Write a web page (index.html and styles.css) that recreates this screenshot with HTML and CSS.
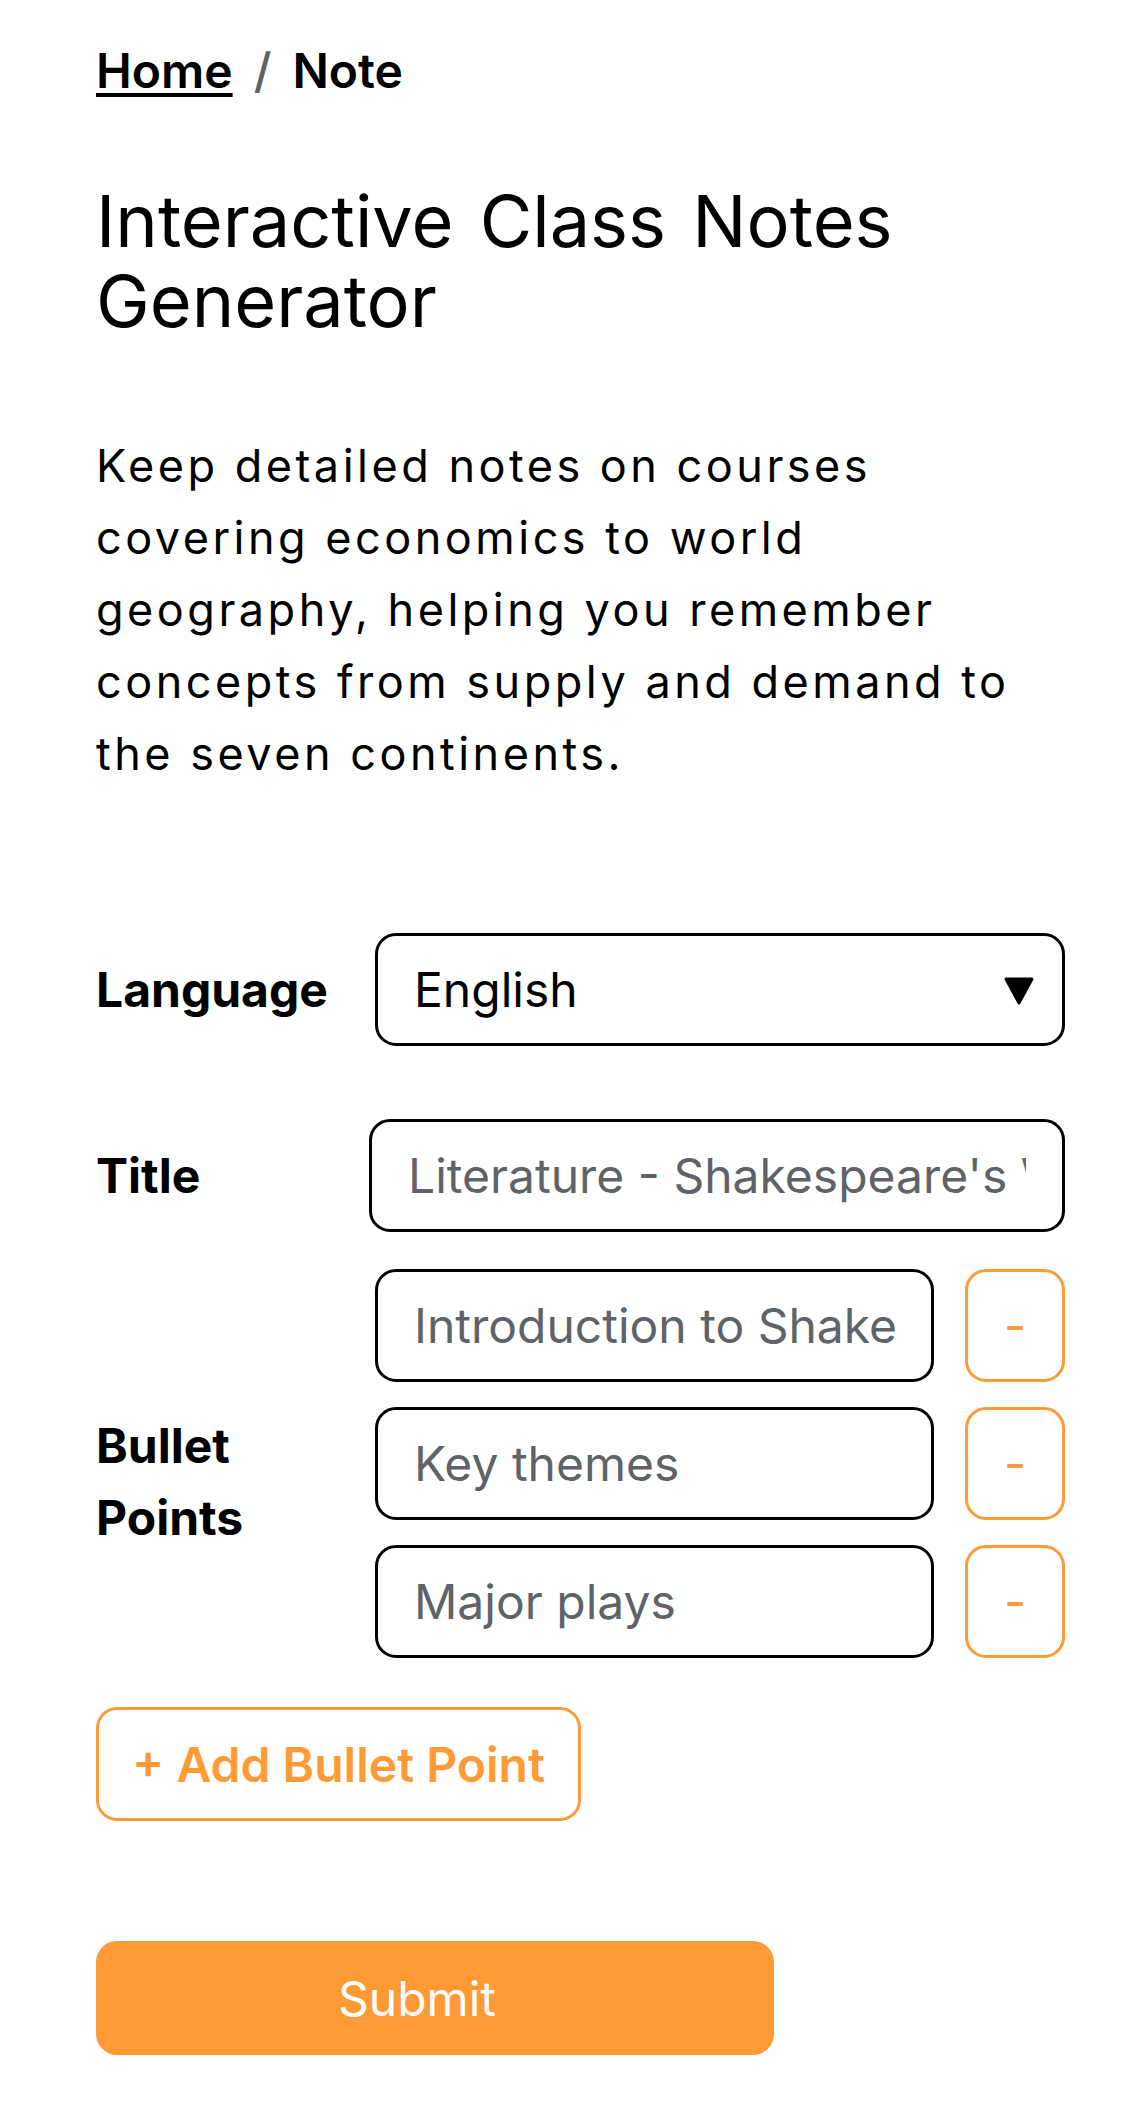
FILE: index.html
```html
<!DOCTYPE html>
<html lang="en">
<head>
<meta charset="utf-8">
<title>Interactive Class Notes Generator</title>
<link rel="stylesheet" href="styles.css">
</head>
<body>
<main class="page">
  <nav class="crumbs">
    <a href="#" class="crumb-link">Home</a>
    <span class="crumb-sep">/</span>
    <span class="crumb-current">Note</span>
  </nav>

  <h1 class="title">Interactive Class Notes Generator</h1>

  <p class="lead">Keep detailed notes on courses covering economics to world geography, helping you remember concepts from supply and demand to the seven continents.</p>

  <form class="form">
    <div class="row row-language">
      <label class="label" for="lang">Language</label>
      <div class="select-wrap">
        <select id="lang" class="select">
          <option>English</option>
        </select>
        <svg class="select-arrow" width="30" height="28" viewBox="0 0 30 28"><path d="M2 2 H28 L15 26 Z" fill="#000" stroke="#000" stroke-width="3" stroke-linejoin="round"/></svg>
      </div>
    </div>

    <div class="row row-title">
      <label class="label" for="title">Title</label>
      <input id="title" class="field" type="text" placeholder="Literature - Shakespeare's Works">
    </div>

    <div class="row row-bullets">
      <span class="label label-bullets">Bullet Points</span>
      <div class="bullets">
        <div class="bullet">
          <input class="field" type="text" placeholder="Introduction to Shakespeare">
          <button type="button" class="remove">-</button>
        </div>
        <div class="bullet">
          <input class="field" type="text" placeholder="Key themes">
          <button type="button" class="remove">-</button>
        </div>
        <div class="bullet">
          <input class="field" type="text" placeholder="Major plays">
          <button type="button" class="remove">-</button>
        </div>
      </div>
    </div>

    <button type="button" class="add">+ Add Bullet Point</button>

    <button type="submit" class="submit">Submit</button>
  </form>
</main>
</body>
</html>
```

FILE: styles.css
```css
* { box-sizing: border-box; }

html, body {
  margin: 0;
  padding: 0;
  background: #fff;
}

body {
  font-family: Inter, "Noto Sans", "Liberation Sans", sans-serif;
  color: #000;
}

.page {
  width: 1065px;
  padding: 0 0 0 96px;
}

.crumbs {
  display: flex;
  align-items: baseline;
  gap: 21px;
  padding-top: 42px;
  font-size: 48px;
  line-height: 58px;
  font-weight: 600;
}

.crumb-link {
  color: #000;
  text-decoration: underline;
  text-decoration-thickness: 4px;
  text-underline-offset: 5px;
}

.crumb-sep {
  color: #5f6368;
  font-weight: 500;
}

.crumb-current { color: #000; }

.title {
  margin: 81px 0 0;
  font-size: 72px;
  line-height: 80px;
  font-weight: 400;
  letter-spacing: 0;
  word-spacing: 6px;
}

.lead {
  margin: 89px 0 0;
  font-size: 45px;
  line-height: 72px;
  letter-spacing: 3.5px;
  max-width: 960px;
}

.form {
  display: flex;
  flex-direction: column;
  margin-top: 143px;
}

.row {
  display: flex;
  align-items: center;
  gap: 49px;
}

.row-title {
  margin-top: 73px;
  gap: 43px;
}

.row-bullets {
  margin-top: 37px;
}

.label {
  width: 230px;
  flex: none;
  font-size: 48px;
  line-height: 72px;
  font-weight: 700;
}

.label-bullets {
  align-self: center;
  margin-top: 36px;
}

.select-wrap {
  position: relative;
  flex: 1 1 0;
  min-width: 0;
}

.select {
  display: block;
  width: 100%;
  height: 113px;
  padding: 0 80px 0 36px;
  border: 3px solid #000;
  border-radius: 21px;
  background: #fff;
  font-family: inherit;
  font-size: 48px;
  color: #000;
  appearance: none;
  -webkit-appearance: none;
}

.select-arrow {
  position: absolute;
  right: 31px;
  top: 44px;
  pointer-events: none;
}

.field {
  display: block;
  flex: 1 1 0;
  width: 0;
  min-width: 0;
  height: 113px;
  padding: 0 36px;
  border: 3px solid #000;
  border-radius: 21px;
  background: #fff;
  font-family: inherit;
  font-size: 48px;
  color: #000;
}

.field::placeholder {
  color: #5f6368;
  opacity: 1;
}

.bullets {
  flex: 1 1 0;
  min-width: 0;
  display: flex;
  flex-direction: column;
  gap: 25px;
}

.bullet {
  display: flex;
  align-items: center;
  gap: 31px;
}

.remove {
  flex: none;
  width: 100px;
  height: 113px;
  border: 3px solid #ff9a35;
  border-radius: 21px;
  background: #fff;
  color: #ff9a35;
  font-family: inherit;
  font-size: 48px;
  padding: 0;
}

.add {
  align-self: flex-start;
  margin-top: 49px;
  height: 114px;
  padding: 0 33px;
  border: 3px solid #ff9a35;
  border-radius: 21px;
  background: #fff;
  color: #ff9a35;
  font-family: inherit;
  font-size: 48px;
  font-weight: 600;
}

.submit {
  align-self: flex-start;
  margin-top: 120px;
  width: 678px;
  height: 114px;
  padding: 0 36px 0 0;
  border: none;
  border-radius: 21px;
  background: #ff9a35;
  color: #fff;
  font-family: inherit;
  font-size: 48px;
  font-weight: 400;
}
```
